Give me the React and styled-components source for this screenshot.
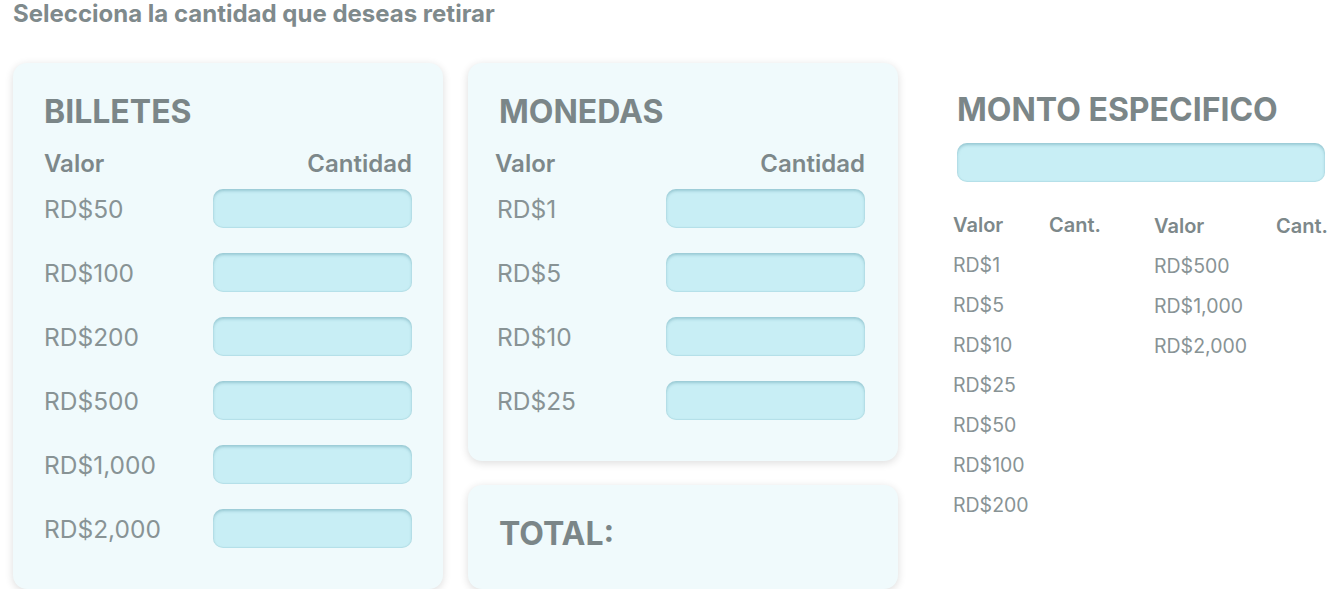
import styled, { createGlobalStyle } from "styled-components";

const GlobalStyle = createGlobalStyle`
    body {
        margin: 0;
        background: #ffffff;
        font-family: Inter, "Noto Sans", sans-serif;
        overflow: hidden;
    }
`;

const Page = styled.div`
    padding: 0 13px;
`;

const PageTitle = styled.h2`
    margin: 0;
    font-size: 24px;
    line-height: 27px;
    font-weight: 700;
    color: #7f8a8c;
`;

const Main = styled.div`
    display: flex;
    margin-top: 36px;
    & > * {
        flex-shrink: 0;
    }
`;

const Column = styled.div`
    display: flex;
    flex-direction: column;
    gap: 24px;
    margin-left: 25px;
`;

const Card = styled.div`
    width: 430px;
    box-sizing: border-box;
    padding: 29px ${({ $right }) => $right || 31}px ${({ $bottom }) => $bottom || 41}px 31px;
    background: #f0fafc;
    border-radius: 14px;
    box-shadow: 0 2px 9px rgba(0, 0, 0, 0.14);
`;

const Heading = styled.h3`
    margin: 0;
    font-size: 32px;
    line-height: 39px;
    font-weight: 700;
    color: #7b8688;
`;

const HeaderRow = styled.div`
    display: flex;
    justify-content: space-between;
    margin: 18px 0 11px ${({ $indent }) => $indent || 0}px;
    font-size: 24px;
    line-height: 29px;
    font-weight: 600;
    color: #7d888a;
`;

const Rows = styled.div`
    display: flex;
    flex-direction: column;
    gap: 25px;
`;

const Row = styled.div`
    display: flex;
    align-items: center;
    justify-content: space-between;
`;

const Label = styled.span`
    font-size: 24.5px;
    font-weight: 400;
    color: #889395;
    margin-left: ${({ $indent }) => $indent || 0}px;
`;

const Field = styled.input`
    width: ${({ $wide }) => ($wide ? "368px" : "199px")};
    height: 39px;
    box-sizing: border-box;
    border: none;
    border-radius: 10px;
    background: #c8eef5;
    box-shadow: inset 0 2px 3px rgba(60, 130, 145, 0.35), inset 0 -1px 1px rgba(60, 130, 145, 0.12);
    outline: none;
`;

const Side = styled.div`
    margin-left: 59px;
    padding-top: 27px;
    width: 368px;
`;

const SideHeading = styled(Heading)`
    margin-bottom: 14px;
`;

const Tables = styled.div`
    display: flex;
    margin-left: -4px;
    margin-top: 23px;
`;

const Table = styled.div`
    display: grid;
    flex-shrink: 0;
    grid-template-columns: ${({ $col }) => $col}px auto;
    grid-auto-rows: 40px;
    width: ${({ $width }) => $width || "auto"};
    margin-top: ${({ $shift }) => $shift || 0}px;
`;

const Th = styled.span`
    font-size: 20px;
    line-height: 40px;
    font-weight: 600;
    color: #7d888a;
`;

const Td = styled.span`
    grid-column: 1;
    font-size: 19.5px;
    line-height: 40px;
    color: #889395;
`;

const billetes = ["RD$50", "RD$100", "RD$200", "RD$500", "RD$1,000", "RD$2,000"];
const monedas = ["RD$1", "RD$5", "RD$10", "RD$25"];
const desgloseA = ["RD$1", "RD$5", "RD$10", "RD$25", "RD$50", "RD$100", "RD$200"];
const desgloseB = ["RD$500", "RD$1,000", "RD$2,000"];

const Denominations = ({ title, items, indent }) => (
    <>
        <Heading>{title}</Heading>
        <HeaderRow $indent={indent}>
            <span>Valor</span>
            <span>Cantidad</span>
        </HeaderRow>
        <Rows>
            {items.map((item) => (
                <Row key={item}>
                    <Label $indent={indent ? indent + 2 : 0}>{item}</Label>
                    <Field />
                </Row>
            ))}
        </Rows>
    </>
);

const App = () => {
    return (
        <Page>
            <GlobalStyle />
            <PageTitle>Selecciona la cantidad que deseas retirar</PageTitle>
            <Main>
                <Card>
                    <Denominations title="BILLETES" items={billetes} />
                </Card>
                <Column>
                    <Card $right={33}>
                        <Denominations title="MONEDAS" items={monedas} indent={-4} />
                    </Card>
                    <Card $bottom={36}>
                        <Heading>TOTAL:</Heading>
                    </Card>
                </Column>
                <Side>
                    <SideHeading>MONTO ESPECIFICO</SideHeading>
                    <Field $wide />
                    <Tables>
                        <Table $col={96} $width="201px">
                            <Th>Valor</Th>
                            <Th>Cant.</Th>
                            {desgloseA.map((d) => (
                                <Td key={d}>{d}</Td>
                            ))}
                        </Table>
                        <Table $col={122} $shift={1}>
                            <Th>Valor</Th>
                            <Th>Cant.</Th>
                            {desgloseB.map((d) => (
                                <Td key={d}>{d}</Td>
                            ))}
                        </Table>
                    </Tables>
                </Side>
            </Main>
        </Page>
    );
};

export default App;
